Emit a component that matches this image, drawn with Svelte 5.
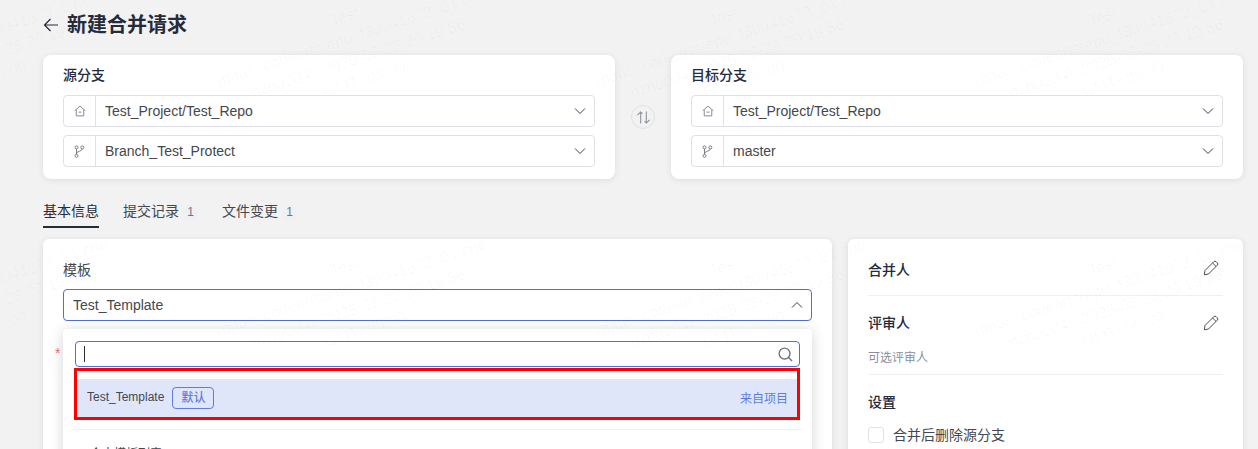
<script>
  const wmRows = [0, 1];
  const wmCols = [0, 1, 2, 3, 4];
</script>

{#snippet chevron(up = false)}
  <svg class="chev" viewBox="0 0 16 16" fill="none" stroke="#3a3f4c" stroke-width="1">
    <path d={up ? 'M3 10.500 8 5.500l5 5' : 'M3 5.500 8 10.500l5-5'} />
  </svg>
{/snippet}

{#snippet houseIcon()}
  <svg class="pre-icon house" viewBox="0 0 16 16" fill="none" stroke="#71757f" stroke-width="1.100">
    <path d="M3 6.500V14.500H13V6.500" />
    <path d="M1 7.600 8 1.500l7 6.100" />
    <path d="M6 9.500h4" />
  </svg>
{/snippet}

{#snippet branchIcon()}
  <svg class="pre-icon" viewBox="0 0 16 16" fill="none" stroke="#71757f" stroke-width="1">
    <circle cx="4.800" cy="3.600" r="1.600" />
    <circle cx="11" cy="3.600" r="1.600" />
    <circle cx="4.800" cy="12.600" r="1.600" />
    <path d="M4.800 5.200v5.800M11 5.200c0 2.800-6.200 2.200-6.200 5" />
  </svg>
{/snippet}

{#snippet pencil()}
  <svg class="pencil" viewBox="0 0 16 16" fill="none" stroke="#4a4d55" stroke-width="1">
    <path d="M2 10.500 10.800 1.700a1.600 1.600 0 0 1 2.300 0l1.200 1.200a1.600 1.600 0 0 1 0 2.300L5.500 14 1.300 14.800z" />
    <path d="M9.600 3l3.400 3.400" />
  </svg>
{/snippet}

{#snippet branchSelect(title, path, branch)}
  <section class="card branch-card">
    <h2>{title}</h2>
    <div class="combo">
      <span class="prefix">{@render houseIcon()}</span>
      <span class="value">{path}</span>
      {@render chevron()}
    </div>
    <div class="combo">
      <span class="prefix">{@render branchIcon()}</span>
      <span class="value">{branch}</span>
      {@render chevron()}
    </div>
  </section>
{/snippet}

<div class="page">
  <header class="head">
    <svg class="back" viewBox="0 0 16 16" fill="none" stroke="#252b3a" stroke-width="1.200">
      <path d="M15 8H1.500M7.500 2 1.500 8l6 6" />
    </svg>
    <h1>新建合并请求</h1>
  </header>

  <div class="branches">
    {@render branchSelect('源分支', 'Test_Project/Test_Repo', 'Branch_Test_Protect')}
    <div class="swap-wrap">
      <span class="swap">
        <svg viewBox="0 0 16 16" fill="none" stroke="#8a8e99" stroke-width="1.100">
          <path d="M5 14.500V2M1.500 5.500 5 2l2 2M11 1.500V14M14.500 10.500 11 14l-2-2" />
        </svg>
      </span>
    </div>
    {@render branchSelect('目标分支', 'Test_Project/Test_Repo', 'master')}
  </div>

  <nav class="tabs">
    <span class="tab active">基本信息</span>
    <span class="tab">提交记录<i class="count">1</i></span>
    <span class="tab">文件变更<i class="count">1</i></span>
  </nav>

  <div class="columns">
    <main class="card form">
      <label class="label" for="tpl">模板</label>
      <div class="combo open" id="tpl">
        <span class="value">Test_Template</span>
        {@render chevron(true)}
      </div>

      <div class="required"><span class="star">*</span></div>

      <div class="dropdown">
        <div class="search">
          <span class="caret"></span>
          <svg viewBox="0 0 16 16" fill="none" stroke="#71757f" stroke-width="1.500">
            <circle cx="7" cy="7" r="5.800" />
            <path d="M11 11l4 4" />
          </svg>
        </div>
        <div class="list">
          <div class="option">
            <span class="opt-name">Test_Template</span>
            <span class="tag">默认</span>
            <span class="source">来自项目</span>
          </div>
          <div class="mark"></div>
        </div>
        <div class="divider"></div>
        <div class="more">个人模板列表</div>
      </div>
    </main>

    <aside class="card side">
      <div class="side-row first">
        <h3>合并人</h3>
        {@render pencil()}
      </div>
      <div class="side-block">
        <div class="side-row">
          <h3>评审人</h3>
          {@render pencil()}
        </div>
        <p class="hint">可选评审人</p>
      </div>
      <h3 class="settings">设置</h3>
      <div class="check"><span class="box"></span>合并后删除源分支</div>
    </aside>
  </div>

  <div class="watermarks" aria-hidden="true">
    {#each wmRows as r}
      {#each wmCols as c}
        <div class="wm-cell">
          <div class="wm">
            <div>Test</div>
            <div>(paas_codeartsrepo_f30041672_01/che</div>
            <div>nzhu004), 2025-08-28 20:19:56</div>
            <div>GMT+08:00</div>
          </div>
        </div>
      {/each}
    {/each}
  </div>
</div>

<style>
  :global(body) {
    margin: 0;
    background: #f2f2f2;
    overflow: hidden;
  }
  .page {
    position: relative;
    width: 1258px;
    height: 449px;
    overflow: hidden;
    box-sizing: border-box;
    padding: 0 15px 0 43px;
    font-family: "Liberation Sans", "Noto Sans CJK SC", sans-serif;
    font-size: 14px;
    color: #252b3a;
  }
  h1, h2, h3, p { margin: 0; }
  .head {
    height: 55px;
    display: flex;
    align-items: center;
    gap: 8px;
    padding-bottom: 5px;
    box-sizing: border-box;
  }
  .back { width: 16px; height: 16px; }
  h1 { font-size: 20px; font-weight: 700; line-height: 28px; color: #252b3a; }
  .card {
    background: #fff;
    border-radius: 8px;
    box-shadow: 0 1px 6px rgba(37, 43, 58, 0.1);
    box-sizing: border-box;
  }
  .branches { display: flex; height: 124px; }
  .branch-card {
    width: 572px;
    padding: 10px 20px;
  }
  h2 {
    font-size: 14px;
    font-weight: 500;
    line-height: 20px;
    color: #252b3a;
    margin-bottom: 10px;
  }
  .combo {
    height: 32px;
    box-sizing: border-box;
    border: 1px solid #dfe1e6;
    border-radius: 4px;
    display: flex;
    align-items: center;
    margin-bottom: 8px;
    padding-right: 6px;
    background: #fff;
  }
  .prefix {
    width: 32px;
    height: 30px;
    box-sizing: border-box;
    border-right: 1px solid #dfe1e6;
    display: flex;
    align-items: center;
    justify-content: center;
    flex: none;
  }
  .pre-icon { width: 15px; height: 15px; }
  .house { width: 12px; height: 12px; }
  .value { flex: 1; padding-left: 9px; color: #43474f; }
  .chev { width: 16px; height: 16px; flex: none; }
  .swap-wrap {
    width: 56px;
    display: flex;
    align-items: center;
    justify-content: center;
  }
  .swap {
    width: 24px;
    height: 24px;
    box-sizing: border-box;
    border: 1px solid #dfe1e6;
    border-radius: 50%;
    display: flex;
    align-items: center;
    justify-content: center;
  }
  .swap svg { width: 15px; height: 15px; }
  .tabs {
    height: 60px;
    box-sizing: border-box;
    padding-top: 22px;
    display: flex;
    gap: 24px;
    line-height: 20px;
  }
  .tab { height: 27px; box-sizing: border-box; color: #43474f; font-size: 14px; }
  .tab.active {
    color: #252b3a;
    border-bottom: 2px solid #252b3a;
  }
  .count {
    display: inline-block;
    width: 15px;
    height: 15px;
    line-height: 15px;
    text-align: center;
    font-style: normal;
    font-size: 12px;
    color: #71757f;
    background: #eef0f5;
    border-radius: 50%;
    margin-left: 4px;
  }
  .columns { display: flex; gap: 16px; }
  .form {
    width: 789px;
    height: 320px;
    padding: 21px 20px 0;
    position: relative;
    border-radius: 6px;
  }
  .label {
    display: block;
    line-height: 20px;
    color: #43474f;
    margin-bottom: 9px;
  }
  .open { border-color: #526ecc; margin-bottom: 0; }
  .required { position: relative; height: 20px; margin-top: 19px; }
  .star {
    position: absolute;
    left: -8px;
    top: 3px;
    color: #f66f6a;
    font-size: 14px;
    line-height: 20px;
  }
  .dropdown {
    position: absolute;
    left: 20px;
    top: 90px;
    width: 749px;
    height: 200px;
    background: #fff;
    border-radius: 4px;
    box-shadow: 0 2px 14px rgba(37, 43, 58, 0.2);
    box-sizing: border-box;
    padding: 12px;
  }
  .search {
    height: 26px;
    box-sizing: border-box;
    border: 1px solid #526ecc;
    border-radius: 4px;
    display: flex;
    align-items: center;
    justify-content: space-between;
    padding: 0 6px 0 8px;
  }
  .caret { width: 1px; height: 16px; background: #252b3a; }
  .search svg { width: 15px; height: 15px; }
  .list {
    position: relative;
    margin: 1px 0 0 -1px;
    width: 726px;
    height: 52px;
    box-sizing: border-box;
    padding: 11px 3px 3px;
  }
  .mark {
    position: absolute;
    inset: 0;
    border: 3px solid #f00;
    pointer-events: none;
  }
  .option {
    height: 38px;
    background: #e0e6fa;
    display: flex;
    align-items: center;
    padding: 0 9px 0 10px;
  }
  .opt-name { font-size: 12px; color: #43474f; margin: 0 8px 2px 0; }
  .tag {
    font-size: 12px;
    line-height: 20px;
    height: 22px;
    box-sizing: border-box;
    border: 1px solid #5e7ce0;
    border-radius: 4px;
    color: #5e7ce0;
    padding: 0 8px;
    font-weight: 500;
  }
  .source { margin: 0 0 2px auto; font-size: 12px; color: #5e7ce0; }
  .divider { height: 1px; background: #eef0f5; margin: 9px -2px 0; }
  .more { margin: 14px 0 0 15px; line-height: 20px; font-size: 12px; color: #43474f; }
  .side {
    width: 395px;
    height: 320px;
    padding: 21px 20px 0;
    border-radius: 6px;
  }
  .side-row {
    display: flex;
    justify-content: space-between;
    align-items: center;
    height: 20px;
  }
  .side-row.first { height: 35px; border-bottom: 1px solid #eef0f5; align-items: flex-start; }
  .pencil { width: 16px; height: 16px; margin-right: 4px; }
  h3 { font-size: 14px; font-weight: 500; line-height: 20px; color: #252b3a; }
  .side-block {
    margin-top: 17px;
    border-bottom: 1px solid #eef0f5;
    height: 62px;
    box-sizing: border-box;
  }
  .hint { font-size: 12px; color: #8a8e99; line-height: 20px; margin-top: 15px; }
  .settings { margin-top: 17px; }
  .check {
    display: flex;
    align-items: center;
    gap: 9px;
    margin-top: 13px;
    color: #43474f;
    line-height: 20px;
  }
  .box {
    width: 16px;
    height: 16px;
    box-sizing: border-box;
    border: 1px solid #dfe1e6;
    border-radius: 3px;
    flex: none;
  }
  .watermarks {
    position: absolute;
    left: -214px;
    top: -77px;
    display: grid;
    grid-template-columns: repeat(5, 379px);
    grid-auto-rows: 250px;
    pointer-events: none;
  }
  .wm-cell {
    display: flex;
    align-items: center;
    justify-content: center;
  }
  .wm {
    transform: rotate(-18deg);
    font-size: 16px;
    line-height: 22px;
    text-align: center;
    white-space: nowrap;
    color: rgba(0, 0, 0, 0.032);
  }
</style>
